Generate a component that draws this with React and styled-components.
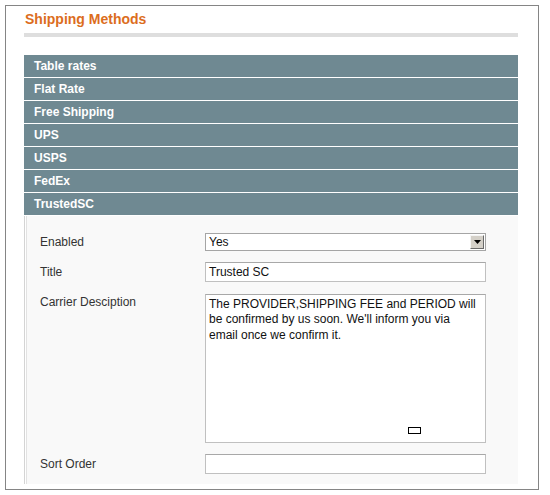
import React from 'react';
import styled, { createGlobalStyle } from 'styled-components';

const GlobalStyle = createGlobalStyle`
  body {
    margin: 0;
    background: #fff;
    font-family: "Liberation Sans", Arial, sans-serif;
  }
`;

const methods = ['Table rates', 'Flat Rate', 'Free Shipping', 'UPS', 'USPS', 'FedEx', 'TrustedSC'];

function App() {
  return (
    <>
      <GlobalStyle />
      <Frame>
        <Title>Shipping Methods</Title>
        <TitleRule />
        <Sections>
          {methods.map((m) => (
            <SectionHead key={m}>{m}</SectionHead>
          ))}
          <Fieldset>
            <Label>Enabled</Label>
            <Select>
              <span>Yes</span>
              <DropButton>
                <svg width="7" height="4" viewBox="0 0 7 4">
                  <path d="M0 0h7L3.5 4z" fill="#000" />
                </svg>
              </DropButton>
            </Select>

            <Label>Title</Label>
            <Input>Trusted SC</Input>

            <Label $top>Carrier Desciption</Label>
            <TextArea>
              The PROVIDER,SHIPPING FEE and PERIOD will
              <br />
              be confirmed by us soon. We'll inform you via
              <br />
              email once we confirm it.
              <Caret />
            </TextArea>

            <Label>Sort Order</Label>
            <Input />
          </Fieldset>
        </Sections>
      </Frame>
    </>
  );
}

const Frame = styled.div`
  margin: 5px;
  width: 534px;
  height: 485px;
  border: 1px solid #858585;
  padding: 0 20px 0 18px;
  box-sizing: border-box;
`;

const Title = styled.h3`
  margin: 0;
  padding: 3px 0 0 1px;
  height: 27px;
  box-sizing: border-box;
  font-size: 14px;
  font-weight: bold;
  color: #dc6d1d;
  line-height: 20px;
`;

const TitleRule = styled.div`
  height: 4px;
  background: #dedede;
`;

const Sections = styled.div`
  margin-top: 18px;
  display: flex;
  flex-direction: column;
`;

const SectionHead = styled.div`
  height: 22px;
  line-height: 22px;
  background: #6f8992;
  color: #fff;
  font-size: 12px;
  font-weight: bold;
  padding-left: 10px;
  border-bottom: 1px solid #fff;
  &:last-of-type {
    border-bottom: none;
  }
`;

const Fieldset = styled.div`
  display: grid;
  grid-template-columns: 165px 281px;
  row-gap: 11px;
  background: #f9f9f9;
  border-left: 1px solid #d4d4d4;
  box-shadow: inset 1px 0 #fff, inset 2px 0 #e2e2e2;
  padding: 17px 0 10px 15px;
  height: 268px;
  box-sizing: border-box;
`;

const Label = styled.div`
  font-size: 12px;
  color: #333;
  align-self: ${(p) => (p.$top ? 'start' : 'center')};
  padding-top: ${(p) => (p.$top ? '1px' : '0')};
`;

const Select = styled.div`
  height: 18px;
  border: 1px solid #a5a5a5;
  background: #fff;
  box-sizing: border-box;
  display: flex;
  align-items: center;
  justify-content: space-between;
  padding: 0 1px 0 3px;
  font-size: 12px;
  color: #111;
`;

const DropButton = styled.div`
  width: 14px;
  height: 14px;
  background: #d4d0c8;
  border: 1px solid;
  border-color: #f4f4f4 #6a6a6a #6a6a6a #f4f4f4;
  box-sizing: border-box;
  display: flex;
  align-items: center;
  justify-content: center;
`;

const Input = styled.div`
  height: 20px;
  border: 1px solid #c0c0c0;
  border-top-color: #a8a8a8;
  background: #fff;
  box-sizing: border-box;
  padding: 0 3px;
  font-size: 12px;
  line-height: 18px;
  color: #111;
`;

const TextArea = styled.div`
  position: relative;
  height: 149px;
  border: 1px solid #c0c0c0;
  border-top-color: #a8a8a8;
  background: #fff;
  box-sizing: border-box;
  padding: 2px 3px;
  font-size: 12px;
  line-height: 15.5px;
  color: #111;
`;

const Caret = styled.span`
  position: absolute;
  left: 202px;
  top: 132px;
  width: 11px;
  height: 5px;
  border: 1px solid #000;
`;

export default App;
